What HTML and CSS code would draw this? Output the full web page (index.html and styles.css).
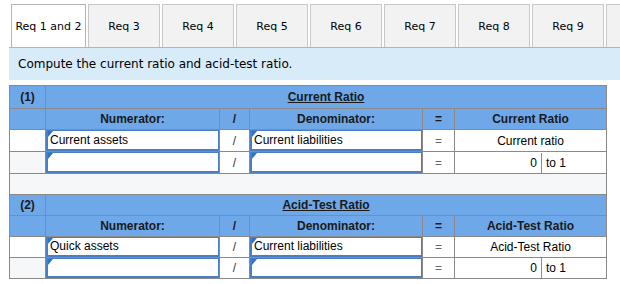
FILE: index.html
```html
<!DOCTYPE html>
<html lang="en">
<head>
    <meta charset="UTF-8">
    <title>Req 1 and 2</title>
    <link rel="stylesheet" href="styles.css">
</head>
<body>
    <div class="tabs">
        <div class="tab active">Req 1 and 2</div>
        <div class="tab">Req 3</div>
        <div class="tab">Req 4</div>
        <div class="tab">Req 5</div>
        <div class="tab">Req 6</div>
        <div class="tab">Req 7</div>
        <div class="tab">Req 8</div>
        <div class="tab">Req 9</div>
        <div class="tab"></div>
    </div>
    <div class="instruction">Compute the current ratio and acid-test ratio.</div>

    <table class="ratios">
        <colgroup>
            <col style="width:36px">
            <col style="width:174px">
            <col style="width:30px">
            <col style="width:173px">
            <col style="width:32px">
            <col style="width:152px">
        </colgroup>
        <tr class="title first">
            <td class="num">(1)</td>
            <td colspan="5"><u>Current Ratio</u></td>
        </tr>
        <tr class="head">
            <td></td>
            <td>Numerator:</td>
            <td>/</td>
            <td>Denominator:</td>
            <td>=</td>
            <td>Current Ratio</td>
        </tr>
        <tr class="data">
            <td></td>
            <td><div class="entry">Current assets</div></td>
            <td class="op">/</td>
            <td><div class="entry">Current liabilities</div></td>
            <td class="op eq">=</td>
            <td class="result">Current ratio</td>
        </tr>
        <tr class="data">
            <td class="shade"></td>
            <td><div class="entry"></div></td>
            <td class="op">/</td>
            <td><div class="entry"></div></td>
            <td class="op eq">=</td>
            <td class="answer"><span class="value">0</span><span class="unit">to 1</span></td>
        </tr>
        <tr class="gap">
            <td colspan="6"></td>
        </tr>
        <tr class="title">
            <td class="num">(2)</td>
            <td colspan="5"><u>Acid-Test Ratio</u></td>
        </tr>
        <tr class="head">
            <td></td>
            <td>Numerator:</td>
            <td>/</td>
            <td>Denominator:</td>
            <td>=</td>
            <td>Acid-Test Ratio</td>
        </tr>
        <tr class="data small">
            <td></td>
            <td><div class="entry">Quick assets</div></td>
            <td class="op">/</td>
            <td><div class="entry">Current liabilities</div></td>
            <td class="op eq">=</td>
            <td class="result">Acid-Test Ratio</td>
        </tr>
        <tr class="data small">
            <td class="shade"></td>
            <td><div class="entry"></div></td>
            <td class="op">/</td>
            <td><div class="entry"></div></td>
            <td class="op eq">=</td>
            <td class="answer"><span class="value">0</span><span class="unit">to 1</span></td>
        </tr>
    </table>
</body>
</html>
```

FILE: styles.css
```css
body {
    margin: 0;
    background: white;
    color: black;
    font-family: "DejaVu Sans", Verdana, sans-serif;
    overflow: hidden;
}
.tabs {
    display: flex;
    gap: 2px;
    height: 43px;
    padding: 4px 0 0 2px;
    margin-left: 9px;
    border-bottom: 1px solid #b4b4b4;
    overflow: hidden;
}
.tab {
    flex: 0 0 70px;
    height: 42px;
    display: flex;
    align-items: center;
    justify-content: center;
    font-size: 11px;
    background: #f2f2f2;
    border: 1px solid #c8c8c8;
    border-bottom: none;
}
.tab.active {
    flex-basis: 73px;
    height: 43px;
    background: white;
    border-color: #b4b4b4;
}
.instruction {
    margin-left: 9px;
    height: 32px;
    background: #d8ebf9;
    padding-left: 9px;
    display: flex;
    align-items: center;
    font-size: 12px;
}
.ratios {
    margin: 5px 0 0 9px;
    width: 597px;
    table-layout: fixed;
    border-collapse: collapse;
    font-family: "Liberation Sans", Arial, sans-serif;
    font-size: 12px;
}
.ratios td {
    border: 1px solid #8a8a8a;
    padding: 0;
    text-align: center;
}
.title td, .head td {
    background: #6fa8e8;
    font-weight: bold;
    color: #1a1a1a;
}
.title {
    height: 21px;
}
.title.first {
    height: 23px;
}
.head {
    height: 21px;
}
.data {
    height: 22px;
}
.data.small {
    height: 21px;
}
.gap td {
    height: 20px;
    background: #f6f7f9;
}
.shade {
    background: #f6f7f9;
}
.op {
    color: #333;
}
.eq {
    color: #666;
}
.entry {
    position: relative;
    height: 18px;
    line-height: 18px;
    text-align: left;
    padding-left: 2px;
    border: 1px solid #4b7fc4;
    border-left-width: 2px;
    border-bottom-width: 2px;
    background: white;
}
.small .entry {
    height: 17px;
    line-height: 17px;
}
.entry::before {
    content: "";
    position: absolute;
    top: 0;
    left: 0;
    border-top: 6px solid #2f6fd0;
    border-right: 5px solid transparent;
}
.ratios .answer {
    text-align: left;
}
.answer .value {
    display: inline-block;
    width: 82px;
    padding-right: 4px;
    text-align: right;
    border-right: 1px solid #8a8a8a;
    line-height: 20px;
}
.answer .unit {
    padding-left: 4px;
}
```
